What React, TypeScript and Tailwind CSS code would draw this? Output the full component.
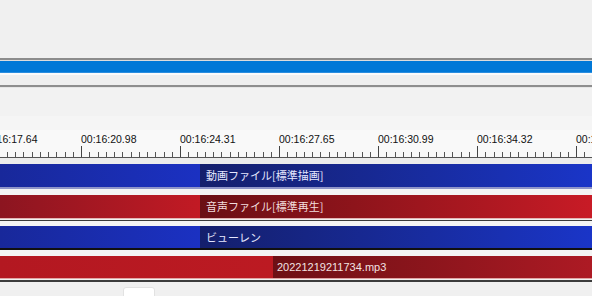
import React from "react";

const marks = ["00:16:17.64", "00:16:20.98", "00:16:24.31", "00:16:27.65", "00:16:30.99", "00:16:34.32", "00:16:37.66"];

const Ruler = () => {
  return (
    <div className="flex ml-[-18px] h-[28px] bg-[#f9f9f9]">
      {marks.map((m) => (
        <div key={m} className="w-[99px] shrink-0 flex flex-col">
          <div className="h-[15px] pt-[3px] text-[10.5px] leading-[12px] text-[#111] whitespace-nowrap">{m}</div>
          <svg width="99" height="13" className="block">
            <line x1="0.5" y1="1" x2="0.5" y2="12" stroke="#444" strokeWidth="1" />
            {Array.from({ length: 11 }).map((_, i) => {
              const x = Math.round((i + 1) * 8.25) + 0.5;
              return <line key={i} x1={x} y1="7" x2={x} y2="12" stroke="#555" strokeWidth="1" />;
            })}
            <line x1="0" y1="12.5" x2="99" y2="12.5" stroke="#555" strokeWidth="1" />
          </svg>
        </div>
      ))}
    </div>
  );
};

const App = () => {
  return (
    <div className="w-[592px] h-[296px] overflow-hidden bg-[#f0f0f0] flex flex-col" style={{ fontFamily: '"Liberation Sans", "Noto Sans CJK JP", sans-serif' }}>
      <div className="h-[58px] shrink-0 bg-[#f0f0f0]" />
      <div className="h-[2px] shrink-0 bg-[#8c8c8c]" />
      <div className="h-[1px] shrink-0 bg-[#dcdcdc]" />
      <div className="h-[11px] shrink-0 bg-[#0078d7]" />
      <div className="h-[1px] shrink-0 bg-[#2a8ee0]" />
      <div className="h-[2px] shrink-0 bg-[#fbfbfb]" />
      <div className="h-[10px] shrink-0 bg-[#efefef]" />
      <div className="h-[2px] shrink-0 bg-[#8e8e8e]" />
      <div className="h-[1px] shrink-0 bg-[#e6e6e6]" />
      <div className="h-[28px] shrink-0 bg-[#f2f2f2]" />
      <div className="h-[14px] shrink-0 bg-[#f5f5f5]" />
      <Ruler />
      <div className="h-[6px] shrink-0 bg-[#ececec]" />

      {/* video track */}
      <div className="h-[23px] shrink-0 flex">
        <div className="w-[200px] bg-linear-to-r from-[#18289a] to-[#1b31c2]" />
        <div className="flex-1 flex items-center pl-[6px] bg-linear-to-r from-[#141f6c] to-[#1a35c8] text-[11px] text-[#e6e8ff]" style={{ fontFamily: '"Noto Sans CJK JP", sans-serif' }}>
          動画ファイル[標準描画]
        </div>
      </div>
      <div className="h-[2px] shrink-0 bg-[#8f95c9]" />
      <div className="h-[6px] shrink-0 bg-[#f4f4f4]" />

      {/* audio track */}
      <div className="h-[23px] shrink-0 flex">
        <div className="w-[200px] bg-linear-to-r from-[#8c1520] to-[#c21a24]" />
        <div className="flex-1 flex items-center pl-[6px] bg-linear-to-r from-[#6a0f14] to-[#c81b26] text-[11px] text-[#f2dede]" style={{ fontFamily: '"Noto Sans CJK JP", sans-serif' }}>
          音声ファイル[標準再生]
        </div>
      </div>
      <div className="h-[1px] shrink-0 bg-[#e2b4b4]" />
      <div className="h-[1px] shrink-0 bg-[#f0f0f0]" />
      <div className="h-[1px] shrink-0 bg-[#3a3a3a]" />
      <div className="h-[5px] shrink-0 bg-[#f4f4f4]" />

      {/* effect track */}
      <div className="h-[22px] shrink-0 flex">
        <div className="w-[200px] bg-linear-to-r from-[#18289a] to-[#1b31c2]" />
        <div className="flex-1 flex items-center pl-[6px] bg-linear-to-r from-[#141f6c] to-[#1a35c8] text-[11px] text-[#e6e8ff]" style={{ fontFamily: '"Noto Sans CJK JP", sans-serif' }}>
          ビューレン
        </div>
      </div>
      <div className="h-[2px] shrink-0 bg-[#101010]" />
      <div className="h-[6px] shrink-0 bg-[#f4f4f4]" />

      {/* mp3 track */}
      <div className="h-[22px] shrink-0 flex">
        <div className="w-[273px] bg-linear-to-r from-[#b31821] to-[#bc1a22]" />
        <div className="flex-1 flex items-center pl-[4px] bg-linear-to-r from-[#6e1015] to-[#ad1a24] text-[11px] text-[#f2e2e2]">
          20221219211734.mp3
        </div>
      </div>
      <div className="h-[1px] shrink-0 bg-[#e0a4a4]" />
      <div className="h-[1px] shrink-0 bg-[#f0f0f0]" />
      <div className="h-[2px] shrink-0 bg-[#3c3c3c]" />
      <div className="flex-1 bg-[#f0f0f0] pt-[5px] pl-[123px]">
        <div className="w-[32px] h-[12px] bg-white border border-[#e2e2e2] rounded-[3px]" />
      </div>
    </div>
  );
};

export default App;
